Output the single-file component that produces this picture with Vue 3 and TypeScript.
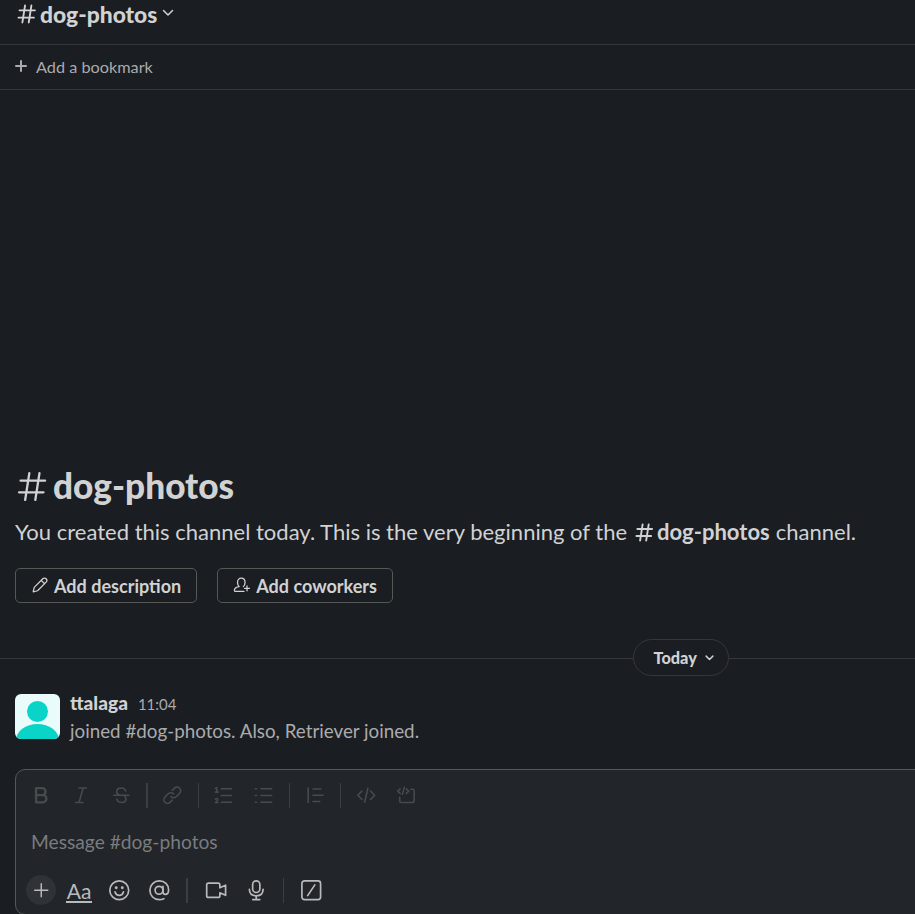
<script setup lang="ts">
import { h, type FunctionalComponent } from 'vue'

interface Tool {
  name: string
  paths?: string[]
  divider?: 'thick' | 'thin'
}

const channel = 'dog-photos'

const formatTools: Tool[] = [
  { name: 'bold', paths: ['M5.4 3.7h5.3a3.1 3.1 0 0 1 0 6.2H5.4zM5.4 9.9h6a3.2 3.2 0 0 1 0 6.4h-6z'] },
  { name: 'italic', paths: ['M8 3.6h6.6M5 16.4h6.6M11.7 3.6 8 16.4'] },
  { name: 'strike', paths: ['M3.2 10h13.6M14 6.3c-.5-1.7-2-2.7-4-2.7-2.3 0-4 1.3-4 3.2 0 1.5 1 2.4 2.6 3.1M6 13.3c.4 1.9 2 3.1 4.2 3.1 2.4 0 4-1.3 4-3.3 0-1.3-.6-2.3-1.9-3'] },
  { name: 'after-marks', divider: 'thick' },
  { name: 'link', paths: ['M8.9 11.2a3.2 3.2 0 0 0 4.6.1l3-3a3.2 3.2 0 0 0-4.5-4.6L10 5.7M11.1 8.8a3.2 3.2 0 0 0-4.6-.1l-3 3A3.2 3.2 0 0 0 8 16.3l2-2'] },
  { name: 'after-link', divider: 'thin' },
  { name: 'ordered', paths: ['M8.3 4.2h9M8.3 10.2h9M8.3 16.2h9', 'M3 3.9l1.2-.7v3.9M3 7.2h2.4M3 13.5c.6-.9 2.1-.6 2.1.4 0 .9-1.3 1.5-2.1 2.6h2.3'] },
  { name: 'bullets', paths: ['M8 4.2h9.5M8 10.2h9.5M8 16.2h9.5M3 4.2h1M3 10.2h1M3 16.2h1'] },
  { name: 'after-lists', divider: 'thin' },
  { name: 'quote', paths: ['M3.7 3.5v13M8 4.5h7M8 10h9M8 15.5h6'] },
  { name: 'after-quote', divider: 'thin' },
  { name: 'code', paths: ['M6.2 6.2 2.5 10l3.7 3.8M13.8 6.2l3.7 3.8-3.7 3.8M11.4 3.8 8.6 16.2'] },
  { name: 'codeblock', paths: ['M4.6 4.2 2.5 6.3l2.1 2.2M10 4.2l2.2 2.1L10 8.5M8.3 3 6.5 9.2M14.2 4.7h1.5a1.3 1.3 0 0 1 1.3 1.3v9.2a1.3 1.3 0 0 1-1.3 1.3H5.500a1.3 1.3 0 0 1-1.3-1.3v-3.5'] },
]

const Chevron: FunctionalComponent = () =>
  h('svg', { viewBox: '0 0 12 8' }, [h('path', { d: 'M1.5 1.5 6 6l4.5-4.5' })])

const Hash: FunctionalComponent = () =>
  h('svg', { viewBox: '0 0 20 20' }, [h('path', { d: 'M3.2 6.7h14M2.3 13.3h14M8.2 2.3 5.8 17.7M14 2.3l-2.4 15.4' })])
</script>

<template>
  <div class="page">
    <header class="title-bar">
      <Hash class="icon title-hash" />
      <h1>{{ channel }}</h1>
      <Chevron class="icon title-chevron" />
    </header>

    <div class="bookmark-bar">
      <svg class="icon plus" viewBox="0 0 12 12"><path d="M6 1v10M1 6h10" /></svg>
      <span>Add a bookmark</span>
    </div>

    <main class="history">
      <section class="intro">
        <h2><Hash class="icon big-hash" /><span>{{ channel }}</span></h2>
        <p class="blurb">
          <span>You created this channel today. This is the very beginning of the</span>
          <Hash class="icon blurb-hash" /><b>{{ channel }}</b><span class="tail">channel.</span>
        </p>
        <div class="actions">
          <button type="button">
            <svg class="icon action-icon" viewBox="0 0 20 20"><path d="M2.4 17.6l1.2-5L13.1 3.1a2.55 2.55 0 0 1 3.7 3.7L7.3 16.4zM11.4 4.9l3.7 3.7" /></svg>
            <span>Add description</span>
          </button>
          <button type="button">
            <svg class="icon action-icon" viewBox="0 0 20 20"><path d="M12.2 17.2H3c-1.100 0-1.600-.7-1.400-1.700.4-2 2.300-3.400 5.300-3.700C5.700 10.700 5 9 5 7.100 5 4.300 6.700 2.400 9.200 2.400s4.200 1.900 4.200 4.700c0 1.900-.7 3.600-1.900 4.700M15.600 11v5.400M12.900 13.700h5.400" /></svg>
            <span>Add coworkers</span>
          </button>
        </div>
      </section>

      <div class="day">
        <i></i>
        <button type="button"><span>Today</span><Chevron class="icon day-chevron" /></button>
        <i class="rest"></i>
      </div>

      <article class="message">
        <svg class="avatar" viewBox="0 0 45 45">
          <rect width="45" height="45" fill="#e9fbfa" />
          <circle cx="22.5" cy="17.5" r="10.5" />
          <ellipse cx="22.5" cy="46" rx="21.5" ry="16" />
        </svg>
        <div class="message-body">
          <div class="byline"><b>ttalaga</b><time>11:04</time></div>
          <p>joined #dog-photos. Also, Retriever joined.</p>
        </div>
      </article>
    </main>

    <section class="composer">
      <div class="formatting">
        <template v-for="tool in formatTools" :key="tool.name">
          <i v-if="tool.divider" :class="['divider', tool.divider, tool.name]"></i>
          <span v-else class="cell">
            <svg :class="['icon', 'tool', tool.name]" viewBox="0 0 20 20"><path v-for="d in tool.paths" :key="d" :d="d" /></svg>
          </span>
        </template>
      </div>
      <div class="placeholder">Message #{{ channel }}</div>
      <div class="attachments">
        <span class="cell first"><span class="add"><svg class="icon tool" viewBox="0 0 20 20"><path d="M10 4.2v11.6M4.2 10h11.6" /></svg></span></span>
        <span class="cell"><span class="aa">Aa</span></span>
        <span class="cell">
          <svg class="icon tool" viewBox="0 0 20 20"><circle cx="10" cy="10" r="8.4" /><path d="M6.3 11.5c.5 1.9 1.8 3 3.7 3s3.2-1.1 3.7-3" /><g class="eyes"><circle cx="7.3" cy="7.7" r="1.3" /><circle cx="12.7" cy="7.7" r="1.3" /></g></svg>
        </span>
        <span class="cell">
          <svg class="icon tool" viewBox="0 0 20 20"><circle cx="9.8" cy="10" r="3.5" /><path d="M13.3 6.500v4.800c0 1.500.8 2.300 2 2.300 1.800 0 3-1.300 3-3.900 0-4.700-3.500-8.100-8.200-8.100A8.300 8.300 0 0 0 1.700 10c0 4.800 3.500 8.400 8.300 8.400 1.500 0 2.900-.3 4.100-.9" /></svg>
        </span>
        <i class="divider thick"></i>
        <span class="cell">
          <svg class="icon tool" viewBox="0 0 20 20"><path d="M13.2 7.8V5.200a1.600 1.600 0 0 0-1.600-1.600H3.100a1.600 1.600 0 0 0-1.600 1.600v9.600a1.600 1.600 0 0 0 1.600 1.600h8.500a1.600 1.600 0 0 0 1.600-1.600v-2.600l5.100 2.300v-9z" /></svg>
        </span>
        <span class="cell">
          <svg class="icon tool" viewBox="0 0 20 20"><rect x="6.8" y="1.6" width="6.4" height="10.4" rx="3.2" /><path d="M3.9 9.2c0 3.7 2.5 5.8 6.1 5.8s6.1-2.100 6.100-5.800M10 15v3.300M6.900 18.300h6.200" /></svg>
        </span>
        <i class="divider thin"></i>
        <span class="cell">
          <svg class="icon tool" viewBox="0 0 20 20"><rect x="1.7" y="1.7" width="16.6" height="16.6" rx="2.3" /><path d="M13.2 5.2 6.8 14.8" /></svg>
        </span>
      </div>
    </section>
  </div>
</template>

<style>
body {
  background: #1a1d21;
  overflow: hidden;
}
</style>

<style scoped>
.page {
  display: flex;
  flex-direction: column;
  height: 914px;
  overflow: hidden;
  background: #1a1d21;
  color: #d1d2d3;
  font-family: Lato, 'Liberation Sans', sans-serif;
}

h1, h2, p { margin: 0; }

button {
  font: inherit;
  color: inherit;
  background: none;
}

.icon {
  display: block;
  flex: none;
  fill: none;
  stroke: currentColor;
  stroke-width: 1.5;
  stroke-linecap: round;
  stroke-linejoin: round;
}

.title-bar {
  display: flex;
  flex: none;
  box-sizing: border-box;
  height: 45px;
  padding-left: 15px;
  border-bottom: 1px solid #35373b;
}

.title-hash { width: 22px; height: 22px; margin: 3px 0 0 1px; stroke-width: 1.7; }

.title-bar h1 {
  margin-left: 2px;
  font-size: 22.8px;
  font-weight: 900;
  line-height: 28px;
}

.title-chevron { width: 12px; height: 8px; margin: 9px 0 0 5px; stroke-width: 1.5; }

.bookmark-bar {
  display: flex;
  flex: none;
  align-items: center;
  box-sizing: border-box;
  height: 45px;
  padding: 0 0 2px 15px;
  border-bottom: 1px solid #35373b;
  color: #ababad;
  font-size: 16.25px;
}

.plus { width: 12px; height: 12px; margin-right: 9px; stroke-width: 2; }

.history {
  display: flex;
  flex: 1;
  flex-direction: column;
  justify-content: flex-end;
}

.intro { padding-left: 15px; }

.intro h2 {
  display: flex;
  align-items: center;
  height: 46px;
  font-size: 35.2px;
  font-weight: 900;
}

.big-hash { width: 35px; height: 35px; margin: 2px 3px 0 0; stroke-width: 1.3; }

.blurb {
  display: flex;
  align-items: center;
  height: 28px;
  margin-top: 9px;
  font-size: 22.03px;
  white-space: nowrap;
}

.blurb-hash { width: 21px; height: 21px; margin: 3px 2px 0 7px; stroke-width: 1.8; }
.tail { margin-left: 6px; }

.actions {
  display: flex;
  gap: 20px;
  margin-top: 23px;
}

.actions button {
  display: flex;
  align-items: center;
  box-sizing: border-box;
  height: 35px;
  padding: 0 15px 0;
  border: 1px solid #565856;
  border-radius: 5px;
  font-size: 18.05px;
  font-weight: 700;
  white-space: nowrap;
}

.action-icon { width: 18px; height: 18px; margin: 0 5px 1px 0; stroke-width: 1.4; }

.day {
  display: flex;
  align-items: center;
  height: 37px;
  margin-top: 36px;
}

.day i { width: 633px; height: 1px; margin-top: 2px; background: #35373b; }
.day .rest { flex: 1; width: auto; }

.day button {
  display: flex;
  align-items: center;
  box-sizing: border-box;
  width: 96px;
  height: 37px;
  padding: 0 0 0 19.5px;
  border: 1px solid #35373b;
  border-radius: 19px;
  font-size: 16.3px;
  font-weight: 900;
}

.day-chevron { width: 9px; height: 6px; margin: 0 0 0 8.5px; stroke-width: 1.9; }

.message {
  display: flex;
  gap: 10px;
  height: 75px;
  padding: 18px 0 0 15px;
}

.avatar { flex: none; width: 45px; height: 45px; border-radius: 6px; fill: #0ad4c8; }

.byline { display: flex; align-items: baseline; height: 22px; line-height: 18px; }
.byline b { font-size: 19.1px; font-weight: 900; }
.byline time { margin-left: 10px; color: #ababad; font-size: 15px; }
.message p { color: #ababad; font-size: 18.8px; line-height: 29px; white-space: nowrap; }

.composer {
  flex: none;
  box-sizing: border-box;
  width: 930px;
  height: 146px;
  margin: 0 0 -1px 15px;
  padding-left: 5px;
  border: 1px solid #565856;
  border-radius: 10px;
  background: #222529;
}

.formatting, .attachments { display: flex; align-items: center; }
.formatting { height: 51px; color: #484b4e; }
.attachments { height: 46px; color: #b9babb; }

.cell { display: flex; align-items: center; justify-content: center; width: 40px; }
.cell.first { margin-right: -2px; }
.tool { width: 22.5px; height: 22.5px; stroke-width: 1.4; }
.bold { stroke-width: 2.1; }
.divider { width: 1px; height: 25px; margin: 0 5px; background: #3c3f42; }
.divider.thick { width: 2px; }
.divider.after-marks { margin-right: 4px; }
.divider.after-link { margin: 0 4px 0 6px; }
.divider.after-lists { margin-left: 6px; }
.attachments .divider.thick { margin: 0 8px 0 7px; }
.attachments .divider.thin { margin: 0 7px 0 7px; }
.attachments .tool { stroke-width: 1.5; }
.attachments .add .tool { stroke-width: 1.3; }
.attachments .eyes { fill: currentColor; stroke: none; }

.placeholder {
  height: 46px;
  padding-left: 10px;
  color: #7a7c7e;
  font-size: 19.2px;
  line-height: 41px;
}

.add {
  display: flex;
  align-items: center;
  justify-content: center;
  width: 30px;
  height: 30px;
  border-radius: 50%;
  background: #2f3236;
}

.aa {
  width: 26px;
  height: 22px;
  margin-top: 1px;
  border-bottom: 2px solid currentColor;
  font-size: 21px;
  line-height: 23px;
  text-align: center;
}
</style>
